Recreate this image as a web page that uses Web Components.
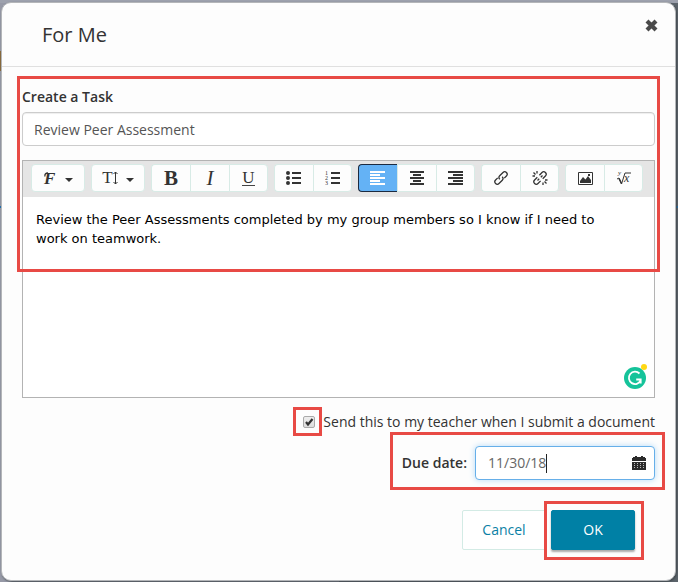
<!DOCTYPE html>
<html lang="en">
<head>
<meta charset="utf-8">
<title>For Me</title>
<style>
  html { min-height: 100%; display: flex; }
  body {
    flex: 1; min-width: 0; margin: 0; display: flex;
    font: 14px/20px "Open Sans", "Noto Sans", sans-serif; color: #333;
    background:
      linear-gradient(#8a6a3c, #8a6a3c) 0 51px / 1px 20px no-repeat,
      linear-gradient(#1f6fae, #1f6fae) 0 206px / 100% 2px no-repeat,
      linear-gradient(#9da1ad, #9da1ad) 0 0 / 100% 3px no-repeat,
      linear-gradient(90deg, #9699a6 0 50%, #5c646b 50%);
  }
</style>
</head>
<body>
<task-dialog heading="For Me"></task-dialog>

<script>
const define = (name, html, setup) => {
  const template = document.createElement('template');
  template.innerHTML = html;
  customElements.define(name, class extends HTMLElement {
    constructor() {
      super();
      this.attachShadow({ mode: 'open' }).append(template.content.cloneNode(true));
    }
    connectedCallback() { if (setup) setup(this, this.shadowRoot); }
  });
};

define('call-out', `
<style>
  :host { position: absolute; box-sizing: border-box; border: 3px solid #e84a45; pointer-events: none; z-index: 2; }
</style>`);

define('tool-group', `
<style>
  :host { display: flex; height: 28px; }
</style><slot></slot>`);

define('tool-button', `
<style>
  :host { display: block; width: 39px; }
  :host([menu]) { width: 54px; }
  button {
    box-sizing: border-box; width: 100%; height: 100%; padding: 0; margin: 0;
    display: flex; align-items: center; justify-content: center; gap: 8px;
    background: #fdfdfd; border: 1px solid #d8ebe6; border-right-width: 0; color: #333;
    font: 20px/20px "Liberation Serif", serif;
  }
  :host(:first-child) button { border-radius: 4px 0 0 4px; }
  :host(:last-child) button { border-radius: 0 4px 4px 0; border-right-width: 1px; }
  :host([menu]) button { border-radius: 4px; }
  :host([active]) button { background: #64b2f5; border-color: #1c2b40; color: #fff; }
  .caret { display: none; width: 0; border: 4px solid transparent; border-top-color: #333; border-bottom: 0; margin-top: 3px; }
  :host([menu]) .caret { display: block; }
</style>
<button type="button"><slot></slot><span class="caret"></span></button>`,
(host, root) => {
  const b = root.querySelector('button');
  b.setAttribute('aria-label', host.getAttribute('label'));
  if (host.hasAttribute('active')) b.setAttribute('aria-pressed', 'true');
});

define('rich-editor', `
<style>
  :host { display: flex; flex-direction: column; position: relative; box-sizing: border-box; height: 238px; border: 1px solid #b3b3b3; background: #fff; }
  .bar { display: flex; gap: 6px; padding: 3px 8px 5px; background: #e5e5e5; }
  .text { flex: 1; padding: 13px 32px 13px 13px; font: 13px/19px "DejaVu Sans", Verdana, sans-serif; color: #000; outline: 0; }
  .text p { margin: 0; }
  svg { display: block; }
  tool-button svg { fill: none; stroke: currentColor; }
  .bold { font-weight: bold; font-size: 21px; }
  .ital { font-style: italic; font-size: 21px; }
  .under { font-size: 17px; line-height: 15px; border-bottom: 1px solid #444; }
  .size { display: flex; align-items: center; font-size: 17px; }
  svg text { fill: currentColor; stroke: none; font-family: "Liberation Serif", serif; }
  .helper { position: absolute; right: 6px; bottom: 7px; }
</style>
<div class="bar" role="toolbar" aria-label="Formatting">
  <tool-group><tool-button menu label="Font"><svg width="14" height="20" viewBox="0 0 14 20"><text x="1" y="16" font-size="17" font-weight="bold" font-style="italic">F</text><path d="M5 5C2.500 5 1.500 6.500 2 8.500" stroke-width="1.300"/></svg></tool-button></tool-group>
  <tool-group><tool-button menu label="Font size"><span class="size">T<svg width="5" height="14" viewBox="0 0 5 14"><path d="M2.500 1v12M.5 3l2-2 2 2M.5 11l2 2 2-2"/></svg></span></tool-button></tool-group>
  <tool-group>
    <tool-button label="Bold"><span class="bold">B</span></tool-button>
    <tool-button label="Italic"><span class="ital">I</span></tool-button>
    <tool-button label="Underline"><span class="under">U</span></tool-button>
  </tool-group>
  <tool-group>
    <tool-button label="Bulleted list"><svg width="16" height="14" viewBox="0 0 16 14"><path d="M6 2h9M6 7h9M6 12h9" stroke-width="2"/><path fill="currentColor" stroke="none" d="M0 2a2 2 0 1 0 4 0a2 2 0 1 0-4 0M0 7a2 2 0 1 0 4 0a2 2 0 1 0-4 0M0 12a2 2 0 1 0 4 0a2 2 0 1 0-4 0"/></svg></tool-button>
    <tool-button label="Numbered list"><svg width="16" height="16" viewBox="0 0 16 16"><path d="M6 3h9M6 8h9M6 13h9" stroke-width="2"/><text x="0" y="5" font-size="6">1</text><text x="0" y="10" font-size="6">2</text><text x="0" y="15" font-size="6">3</text></svg></tool-button>
  </tool-group>
  <tool-group>
    <tool-button active label="Align left"><svg width="16" height="14" viewBox="0 0 16 14"><path d="M0 1h15M0 4h10M0 7h15M0 10h10M0 13h15" stroke-width="2"/></svg></tool-button>
    <tool-button label="Align center"><svg width="16" height="14" viewBox="0 0 16 14"><path d="M1 1h14M4 4h8M1 7h14M4 10h8M1 13h14" stroke-width="2"/></svg></tool-button>
    <tool-button label="Align right"><svg width="16" height="14" viewBox="0 0 16 14"><path d="M0 1h15M5 4h10M0 7h15M5 10h10M0 13h15" stroke-width="2"/></svg></tool-button>
  </tool-group>
  <tool-group>
    <tool-button label="Insert link"><svg width="16" height="16" viewBox="0 0 16 16" stroke-width="1.300"><path d="M6.800 9.300C5.600 8 5.800 6.700 6.700 5.800L10 2.500C11 1.500 12.400 1.500 13.400 2.500S14.400 5 13.400 6L11.300 8.100M9.200 6.700C10.400 8 10.200 9.300 9.300 10.200L6 13.500C5 14.500 3.600 14.500 2.600 13.500S1.600 11 2.600 10L4.700 7.900"/></svg></tool-button>
    <tool-button label="Remove link"><svg width="16" height="16" viewBox="0 0 16 16" stroke-width="1.300"><path d="M7.400 5.200L10 2.500C11 1.500 12.400 1.500 13.400 2.500S14.400 5 13.400 6L10.700 8.700M8.600 10.900L6 13.500C5 14.500 3.600 14.500 2.600 13.500S1.600 11 2.600 10L5.300 7.300M10.500 5.500L8.800 7.200M7.200 8.800L5.500 10.500M5 1v2.500M1.500 2.500L3.500 4.500M.5 6H3M11 12.500V15M12.500 11.500l2 2M13 10h2.500"/></svg></tool-button>
  </tool-group>
  <tool-group>
    <tool-button label="Insert image"><svg width="15" height="13" viewBox="0 0 15 13"><path d="M.5.5h14v12H.5z"/><path fill="currentColor" stroke="none" d="M2 11V9l3-4 2.500 2.500L10 4l3 4v3zM10 2h2v2h-2z"/></svg></tool-button>
    <tool-button label="Insert equation"><svg width="16" height="16" viewBox="0 0 16 16"><path d="M1 9l2-1 2.500 6L9 3h6"/><path d="M3 8.500L5.500 13.500" stroke-width="1.500"/><text x="8" y="12" font-size="12" font-style="italic">x</text><text x="2" y="5" font-size="7" font-style="italic">y</text></svg></tool-button>
  </tool-group>
</div>
<div class="text" contenteditable="true" role="textbox" aria-multiline="true" aria-label="Task details" spellcheck="false"><p>Review the Peer Assessments completed by my group members so I know if I need to work on teamwork.</p></div>
<svg class="helper" width="26" height="27" viewBox="0 0 26 27" aria-hidden="true">
  <circle cx="13" cy="15" r="11" fill="#15c39a"/>
  <path d="M17.500 10.500A6.200 6.200 0 1 0 18.700 17.500M14.200 16.500H18.700V20.500" fill="none" stroke="#fff" stroke-width="1.800"/>
  <circle cx="22" cy="4" r="3" fill="#ffd814"/>
</svg>`);

define('date-field', `
<style>
  :host { display: flex; align-items: center; gap: 8px; }
  label { font-weight: 600; }
  .box {
    box-sizing: border-box; width: 180px; height: 34px; padding: 0 8px 0 12px; display: flex; align-items: center;
    background: #fff; border: 1px solid #66afe9; border-radius: 4px; box-shadow: 0 0 6px #b5dbf7;
  }
  input { field-sizing: content; border: 0; padding: 0; margin: 0; outline: 0; background: none; font: inherit; color: #666; }
  .caret { width: 1px; height: 19px; background: #222; }
  button { margin: 0 0 0 auto; padding: 0; border: 0; background: none; display: block; }
  svg { display: block; }
</style>
<label for="due">Due date:</label>
<div class="box">
  <input id="due" type="text" value="11/30/18"><span class="caret"></span>
  <button type="button" aria-label="Open calendar"><svg width="14" height="15" viewBox="0 0 14 15"><path fill="#2b2b2b" d="M1 1h2V0h2v1h4V0h2v1h2v1h1v3H0V2h1zM0 6h14v8H0z"/><path fill="#bbb" d="M2 7h1v1H2zM5 7h1v1H5zM8 7h1v1H8zM11 7h1v1h-1zM2 9h1v1H2zM5 9h1v1H5zM8 9h1v1H8zM11 9h1v1h-1zM2 11h1v1H2zM5 11h1v1H5zM8 11h1v1H8zM11 11h1v1h-1z"/></svg></button>
</div>`);

define('action-button', `
<style>
  :host { display: block; }
  button {
    box-sizing: border-box; height: 40px; min-width: 84px; padding: 0 16px; display: block;
    font: inherit; color: #0b7fa5; background: #fff; border: 1px solid #d3ebe5; border-radius: 2px;
  }
  :host([primary]) button { color: #fff; background: #0080a5; border-color: #0080a5; box-shadow: 0 2px 2px #aaa; }
</style>
<button type="button"><slot></slot></button>`);

define('task-dialog', `
<style>
  :host {
    flex: 1; min-width: 0; box-sizing: border-box; position: relative; display: block;
    margin: 2px 2px 1px 1px; background: #fdfdfd; border: 1px solid #b4b6b9; border-radius: 10px;
    box-shadow: 1px 1px 2px #444b50;
  }
  header { display: flex; justify-content: space-between; align-items: flex-start; padding: 15px 16px 15px 40px; border-bottom: 1px solid #e0e0e0; }
  h1 { margin: 0; padding: 4px 0; font-size: 20px; line-height: 25px; font-weight: 400; }
  .close { margin: 0; padding: 1px; border: 0; background: none; display: block; }
  .close svg { display: block; }
  main { padding: 20px 20px 0; position: relative; }
  .title { display: block; font-weight: 600; margin-bottom: 5px; }
  .name {
    box-sizing: border-box; display: block; width: 100%; height: 34px; margin: 0 0 14px; padding: 0 11px;
    font: inherit; color: #555; background: #fff; border: 1px solid #ccc; border-radius: 4px; outline: 0;
    box-shadow: inset 0 1px 1px #eee;
  }
  .send { display: flex; justify-content: flex-end; align-items: center; gap: 8px; padding: 14px 0; }
  .tick { position: relative; display: block; }
  .tick input { appearance: none; display: block; box-sizing: border-box; width: 12px; height: 12px; margin: 0; border: 1px solid #aaa; border-radius: 2px; background: linear-gradient(#eee, #ddd); }
  .tick svg { position: absolute; inset: 0; pointer-events: none; }
  .due { display: flex; justify-content: flex-end; }
  footer { display: flex; justify-content: flex-end; gap: 5px; padding: 30px 40px; }
  .ok { position: relative; }
  .f1 { top: 9px; left: 15px; right: 15px; height: 196px; }
  .f2 { inset: -9px -7px -8px -10px; }
  .f3 { inset: -14px -10px -10px -12px; }
  .f4 { inset: -9px -9px -10px -7px; }
  .duewrap { position: relative; }
</style>
<header>
  <h1></h1>
  <button class="close" type="button" aria-label="Close"><svg width="13" height="13" viewBox="0 0 13 13"><path stroke="#4a4a4a" stroke-width="4.200" d="M2 2l9 9M11 2l-9 9"/></svg></button>
</header>
<main>
  <call-out class="f1"></call-out>
  <label class="title" for="name">Create a Task</label>
  <input class="name" id="name" type="text" value="Review Peer Assessment">
  <rich-editor></rich-editor>
  <div class="send">
    <span class="tick"><input id="send" type="checkbox" checked><svg width="12" height="12" viewBox="0 0 12 12"><path fill="none" stroke="#333" stroke-width="2.200" d="M3 6l2 2.500L9.500 3"/></svg><call-out class="f2"></call-out></span>
    <label for="send">Send this to my teacher when I submit a document</label>
  </div>
  <div class="due"><div class="duewrap"><date-field></date-field><call-out class="f3"></call-out></div></div>
</main>
<footer>
  <action-button>Cancel</action-button>
  <div class="ok"><action-button primary>OK</action-button><call-out class="f4"></call-out></div>
</footer>`,
(host, root) => { root.querySelector('h1').textContent = host.getAttribute('heading'); });
</script>
</body>
</html>
